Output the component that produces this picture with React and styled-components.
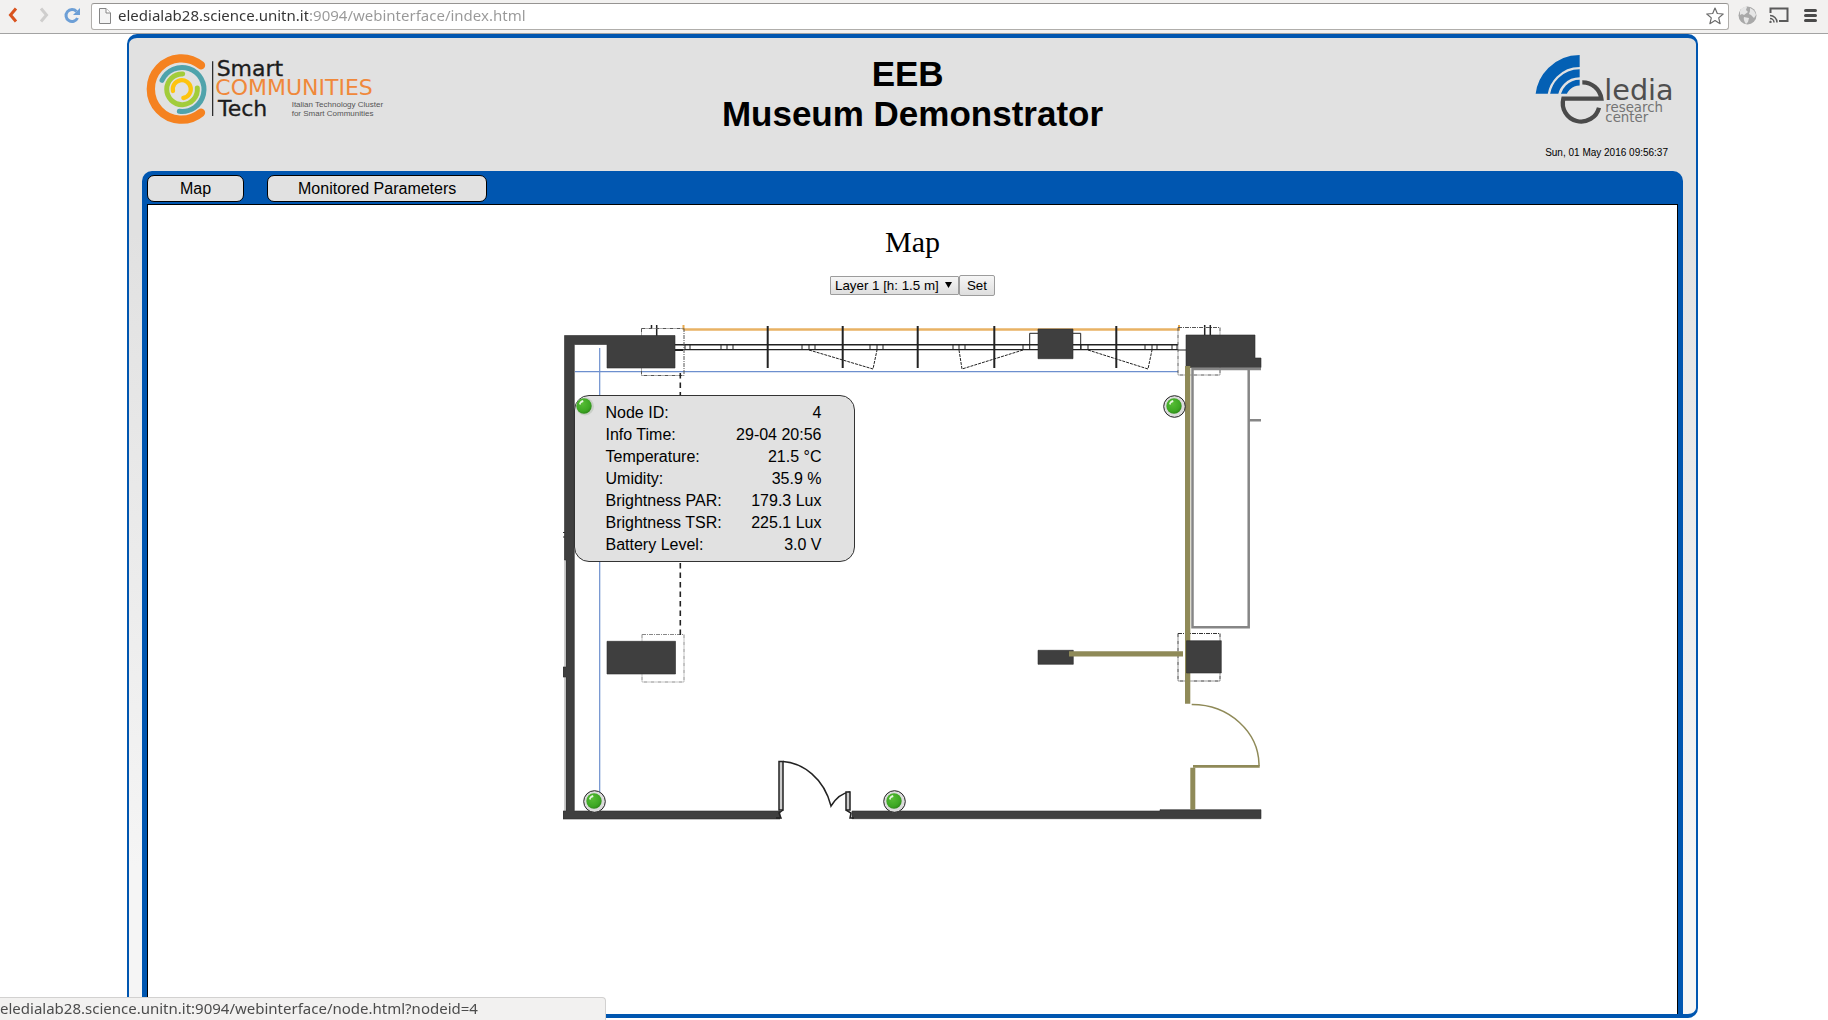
import React from "react";
import styled, { createGlobalStyle } from "styled-components";

const BLUE = "#0056b0";
const GREY = "#e1e1e1";
const WALL = "#3f3f3f";
const OLIVE = "#8f8a58";
const SANS = '"Liberation Sans", Arial, sans-serif';
const SERIF = '"Liberation Serif", "Times New Roman", serif';
const UI = '"Noto Sans", "Open Sans", sans-serif';
const WIDE = '"DejaVu Sans", sans-serif';

const GlobalStyle = createGlobalStyle`
  * { box-sizing: border-box; }
  body { margin: 0; background: #fff; color: #000; font-family: ${SANS}; }
`;

const Screen = styled.div`
  min-height: 100vh;
  display: flex;
  flex-direction: column;
`;

/* Browser toolbar */
const Toolbar = styled.div`
  display: flex;
  align-items: center;
  height: 34px;
  padding: 0 0 3px 4px;
  background: #f2f1f0;
  border-bottom: 1px solid #a3a3a3;
`;

const ToolButton = styled.button`
  display: flex;
  align-items: center;
  justify-content: center;
  width: ${(p) => p.$width}px;
  height: 24px;
  padding: 0;
  border: 0;
  background: none;
`;

const History = styled.div`
  display: flex;
  gap: 6px;
`;

const AddressBar = styled.label`
  flex: 1;
  display: flex;
  align-items: center;
  height: 27px;
  margin: 2px 0 0 7px;
  padding: 0 4px 0 7px;
  gap: 7px;
  background: #fff;
  border: 1px solid #b0aeab;
  border-top-color: #969492;
  border-radius: 3px;
`;

const Address = styled.input`
  flex: 1;
  min-width: 0;
  height: 24px;
  padding: 0 0 2px;
  border: 0;
  outline: 0;
  font: 15px/22px ${UI};
  color: transparent;
  background: linear-gradient(to right, #333 190px, #989898 190px);
  background-clip: text;
  -webkit-background-clip: text;
`;

const Status = styled.div`
  position: fixed;
  left: 0;
  bottom: 0;
  width: 606px;
  height: 23px;
  background: #f2f1f0;
  border: 1px solid #d2d1d0;
  border-width: 1px 1px 0 0;
  border-radius: 0 4px 0 0;
  font: 15px/20px ${UI};
  color: #4c4c4c;
  white-space: nowrap;
`;

/* Page frame */
const Frame = styled.div`
  flex: 1;
  display: flex;
  flex-direction: column;
  margin: 0 130px 2px 127px;
  border: solid ${BLUE};
  border-width: 4px 2px;
  border-radius: 10px;
  background: linear-gradient(${GREY} 20%, #f5f5f5 85%);
`;

const Header = styled.header`
  display: grid;
  grid-template-columns: 1fr auto 1fr;
  align-items: start;
  padding: 16px 18px 12px;
`;

const Title = styled.h1`
  margin: 0;
  font: bold 35px/40px ${SANS};
  text-align: center;
`;

const Brand = styled.div`
  display: flex;
  flex-direction: column;
  align-items: flex-end;
  gap: 23px;
  padding-right: 2px;
`;

const Logo = styled.svg`
  display: block;
  overflow: visible;
`;

const Clock = styled.time`
  padding-right: 8px;
  font: 10px/12px ${SANS};
`;

const Panel = styled.div`
  flex: 1;
  display: flex;
  flex-direction: column;
  margin: 0 13px;
  padding: 0 5px;
  background: ${BLUE};
  border-radius: 10px 10px 0 0;
`;

const Nav = styled.nav`
  display: flex;
  gap: 23px;
  padding: 4px 0 2px;
`;

const Tab = styled.button`
  min-width: 97px;
  height: 27px;
  padding: 0 30px;
  border: 1px solid #000;
  border-radius: 7px;
  background: ${GREY};
  color: #000;
  font: 16px/22px ${SANS};
`;

const Content = styled.main`
  flex: 1;
  display: flex;
  flex-direction: column;
  align-items: center;
  padding: 20px 0 32px;
  background: #fff;
  border: 1px solid #000;
  border-bottom: 0;
`;

const Heading = styled.h2`
  margin: 0 0 16px;
  font: 30px/34px ${SERIF};
`;

const LayerForm = styled.form`
  display: flex;
  align-items: center;
  margin-bottom: 29px;
`;

const SelectBox = styled.div`
  position: relative;
  display: flex;
`;

const Arrow = styled.svg`
  position: absolute;
  right: 7px;
  top: 6px;
  pointer-events: none;
`;

const LayerSelect = styled.select`
  appearance: none;
  width: 129px;
  height: 19px;
  padding: 0 4px;
  border: 1px solid #9c9c9c;
  border-radius: 1px;
  background: linear-gradient(#f6f6f6, #dedede);
  color: #000;
  font-family: ${SANS};
`;

const SetButton = styled.button`
  width: 36px;
  height: 21px;
  padding: 0;
  border: 1px solid #9c9c9c;
  border-radius: 2px;
  background: linear-gradient(#f6f6f6, #dedede);
  color: #000;
  font-family: ${SANS};
`;

/* Floor map */
const MapArea = styled.div`
  position: relative;
  width: 700px;
`;

const Plan = styled.svg`
  display: block;
  width: 100%;
`;

const Marker = styled.a`
  position: absolute;
  z-index: ${(p) => (p.$active ? 2 : 0)};
  left: ${(p) => p.$x}px;
  top: ${(p) => p.$y}px;
  width: 23px;
  height: 23px;
  margin: -11px 0 0 -11px;
  svg { display: block; }
`;

const Tooltip = styled.div`
  position: absolute;
  z-index: 1;
  left: 11px;
  top: 70px;
  width: 281px;
  padding: 6px 32px 5px 31px;
  border: 1px solid #333;
  border-radius: 15px;
  background: ${GREY};
`;

const Readings = styled.table`
  width: 100%;
  border-collapse: collapse;
  font: 16px/22px ${SANS};
`;

const Name = styled.th`
  padding: 0;
  font-weight: normal;
  text-align: left;
`;

const Value = styled.td`
  padding: 0;
  text-align: right;
`;

const readings = [
  ["Node ID:", "4"],
  ["Info Time:", "29-04 20:56"],
  ["Temperature:", "21.5 °C"],
  ["Umidity:", "35.9 %"],
  ["Brightness PAR:", "179.3 Lux"],
  ["Brightness TSR:", "225.1 Lux"],
  ["Battery Level:", "3.0 V"],
];

const nodes = [
  { id: 4, x: 21, y: 81, active: true },
  { id: 3, x: 611, y: 81 },
  { id: 1, x: 31, y: 476 },
  { id: 2, x: 331, y: 476 },
];

function SmartLogo() {
  return (
    <Logo width="236" height="70" viewBox="51 42 708 210" role="img" aria-label="Smart Communities Tech">
      <g fill="none" strokeLinecap="round">
        <path d="M213 76A92 92 0 1 0 213 218" stroke="#f58220" strokeWidth="25" />
        <path d="M96 121A66 66 0 1 1 148 214" stroke="#4fa3ab" strokeWidth="15" />
        <path d="M158 102A46 46 0 1 0 202 144" stroke="#a2cc3a" strokeWidth="15" />
        <path d="M129 153A27 27 0 1 1 160 174" stroke="#fdc40f" strokeWidth="13" />
      </g>
      <path d="M248 64V228" stroke="#1d1d1d" strokeWidth="3.500" />
      <g fontFamily={WIDE}>
        <text x="260" y="107" fontSize="66" fill="#1d1d1d" stroke="#1d1d1d">Smart</text>
        <text x="256" y="166" fontSize="66" fill="#f0883a">COMMUNITIES</text>
        <text x="264" y="227" fontSize="66" fill="#1d1d1d" stroke="#1d1d1d">Tech</text>
      </g>
      <g fontFamily={SANS} fontSize="24" fill="#555">
        <text x="485" y="200">Italian Technology Cluster</text>
        <text x="485" y="227">for Smart Communities</text>
      </g>
    </Logo>
  );
}

function ElediaLogo() {
  return (
    <Logo width="141" height="70" viewBox="107 44 423 210" role="img" aria-label="Eledia research center">
      <defs>
        <clipPath id="waves"><rect x="100" y="40" width="141" height="123" /></clipPath>
      </defs>
      <g clipPath="url(#waves)" fill="none" stroke="#0460b4">
        <circle cx="241" cy="180" r="115" strokeWidth="36" />
        <circle cx="241" cy="180" r="78" strokeWidth="24" />
        <circle cx="241" cy="180" r="50" strokeWidth="17" />
      </g>
      <path d="M249 129A57 57 0 0 1 306 178H192A55 55 0 0 0 299 205" fill="none" stroke="#4a4a4a" strokeWidth="13" />
      <g fontFamily={WIDE}>
        <text x="315" y="183" fontSize="86" fill="#4f4f4f">ledia</text>
        <text x="318" y="217" fontSize="40" fill="#747474">research</text>
        <text x="318" y="247" fontSize="40" fill="#747474">center</text>
      </g>
    </Logo>
  );
}

function Led({ active }) {
  return (
    <svg width="23" height="23" viewBox="0 0 23 23" aria-hidden="true">
      <defs>
        <radialGradient id="led" cx="0.4" cy="0.35" r="0.7">
          <stop offset="0" stopColor="#56bd35" />
          <stop offset="0.7" stopColor="#3da723" />
          <stop offset="1" stopColor="#2c8418" />
        </radialGradient>
      </defs>
      {active ? (
        <circle cx="12" cy="11.500" r="9" fill="#c9cfc7" />
      ) : (
        <circle cx="11.500" cy="11.500" r="10.800" fill="#dcdcdc" stroke="#222" />
      )}
      <circle cx="11" cy="11" r="7.700" fill="url(#led)" />
      <path d="M6 9Q7 5.500 10 5L10.500 7Q7.500 7.500 7.500 10Z" fill="#e4f6dd" />
    </svg>
  );
}

const ticks = [
  685, 690, 721, 727, 733, 802, 809, 815, 870, 877, 883, 953, 959, 965, 1023, 1081, 1088, 1145, 1152, 1157, 1172, 1177,
];
const mullions = [767.7, 842.7, 917.7, 994.3, 1116.3];

function FloorPlan() {
  return (
    <Plan viewBox="563 325 700 495" role="img" aria-label="Floor plan">
      {/* guide lines */}
      <g stroke="#6d8fce" strokeWidth="1.200">
        <path d="M575 371.700H1178M599.700 348V792" />
      </g>
      <path d="M683.500 329.500H1180" stroke="#e8b264" strokeWidth="2.400" />
      <path d="M683.500 325V330M1179 325V330" stroke="#e8a94c" strokeWidth="2" />

      {/* window strip */}
      <g stroke="#222" fill="none">
        <path d="M675 344.700H1178" strokeWidth="1.500" />
        <path d="M675 349.700H1178" strokeWidth="1.200" />
        {ticks.map((x) => (
          <path key={x} d={`M${x} 345V350`} />
        ))}
        {mullions.map((x) => (
          <path key={x} d={`M${x} 326V368`} strokeWidth="2" />
        ))}
        <path d="M1029.700 349V333.300H1080.700V349M675 350.500H683M1178 350H1187" />
        <path d="M809 350L873 369L877 350M1023 350L962 369L959 350M1088 350L1148 369L1152 350" strokeDasharray="3 1" />
        <path d="M651.500 325V328M656.700 325V336M1204.700 325V335M1210.300 325V335" strokeWidth="1.500" />
      </g>

      {/* column outlines */}
      <g fill="none" stroke="#555" strokeDasharray="4 1 1 1">
        <path d="M641.500 328.500H684V375.500H641.500Z" />
        <path d="M1178 327.500H1220V375H1178Z" />
        <path d="M642 634.500H684V682H642Z" stroke="#888" />
        <path d="M1178 633.500H1220V681H1178Z" stroke="#333" />
      </g>
      <path d="M680.300 373V637" stroke="#222" strokeWidth="1.600" strokeDasharray="5.500 4" />

      {/* walls and columns */}
      <path d="M564.500 535V812" stroke="#ccc" />
      <path d="M563 532.500H566M563 537H566" stroke="#333" />
      <g fill={WALL} stroke="#2c2c2c" strokeWidth="0.600">
        <path d="M564.500 335.500H675V368H607V344.500H574.300V811H780V819H563V811H566V677H563V667H566V560H564.500Z" />
        <path d="M1038 329H1073V358.700H1038Z" />
        <path d="M1186 335H1255V358H1261V367.500H1186Z" />
        <path d="M607 641.300H675.500V674H607Z" />
        <path d="M1038 650.300H1073.300V664.300H1038Z" />
        <path d="M852 811H1160V809.700H1261V818.700H852Z" />
      </g>

      {/* side room */}
      <g fill="none" stroke="#868686" strokeWidth="2.500">
        <path d="M1192.500 369H1248.700V627.200H1192.500ZM1248 369H1261M1249 420.300H1261" />
      </g>
      <g fill={OLIVE}>
        <path d="M1185 366H1190.300V703.700H1185Z" />
        <path d="M1069 651.300H1183V656.500H1069Z" />
        <path d="M1193 765H1259.700V767.700H1193Z" />
        <path d="M1190.300 767.700H1195.300V809.700H1190.300Z" />
      </g>
      <path d="M1191.700 704.500A67 61 0 0 1 1259 766" fill="none" stroke={OLIVE} strokeWidth="1.500" />
      <path d="M1186.500 640.700H1221.300V673H1186.500Z" fill={WALL} stroke="#2c2c2c" strokeWidth="0.600" />

      {/* entrance door */}
      <g fill="none" stroke="#222" strokeWidth="1.500">
        <path d="M779 761.500H783V810H779Z" fill="#ccc" />
        <path d="M783 761.500C803 763 824 778 831 806C836 798 842 793 850 792" />
        <path d="M846 792H850V810H846Z" fill="#ccc" />
        <path d="M783 810L779 813L781 818H776M846 810L851 813L850 818H854" />
      </g>
    </Plan>
  );
}

export default function App() {
  return (
    <>
      <GlobalStyle />
      <Screen>
        <Toolbar>
          <History>
            <ToolButton $width={18} aria-label="Back">
              <svg width="10" height="16" viewBox="0 0 10 16"><path d="M8 1.500L2.500 8L8 14.500" fill="none" stroke="#d9531e" strokeWidth="3" /></svg>
            </ToolButton>
            <ToolButton $width={32} aria-label="Forward">
              <svg width="10" height="16" viewBox="0 0 10 16"><path d="M2 1.500L7.500 8L2 14.500" fill="none" stroke="#cfcecd" strokeWidth="3" /></svg>
            </ToolButton>
          </History>
          <ToolButton $width={24} aria-label="Reload">
            <svg width="17" height="17" viewBox="0 0 17 17">
              <path d="M13.500 11A6 6 0 1 1 12.500 4.500" fill="none" stroke="#6d9fd6" strokeWidth="3" />
              <path d="M16 1V8H9Z" fill="#6d9fd6" />
            </svg>
          </ToolButton>
          <AddressBar>
            <svg width="12" height="16" viewBox="0 0 12 16" aria-hidden="true">
              <path d="M.5.500H7L11.500 5V15.500H.5Z" fill="#f4f4f4" stroke="#858585" />
              <path d="M7 .5V5H11.500" fill="#fff" stroke="#858585" />
            </svg>
            <Address
              aria-label="Address"
              spellCheck={false}
              defaultValue="eledialab28.science.unitn.it:9094/webinterface/index.html"
            />
            <svg width="18" height="18" viewBox="0 0 18 18" aria-hidden="true">
              <path d="M9 1L11.300 6.500L17.200 7L12.700 10.900L14.100 16.700L9 13.600L3.900 16.700L5.300 10.900L.8 7L6.700 6.500Z" fill="#fff" stroke="#6b6b6b" strokeWidth="1.200" strokeLinejoin="round" />
            </svg>
          </AddressBar>
          <ToolButton $width={36} aria-label="Network">
            <svg width="19" height="19" viewBox="0 0 19 19">
              <circle cx="9.500" cy="9.500" r="9" fill="#a9a9a9" />
              <path d="M2 5Q5 0 9 1L8 4L10 6L6 9L4 8L2 9ZM12 2Q17 4 18 9L16 12L13 9L11 8L12 5ZM6 11L11 12L10 16L8 18Q5 14 6 11Z" fill="#e6e6e6" />
            </svg>
          </ToolButton>
          <ToolButton $width={28} aria-label="Cast">
            <svg width="20" height="16" viewBox="0 0 20 16" fill="none" stroke="#5a5a5a">
              <path d="M1.500 6V1.500H18.500V14H10" strokeWidth="2" />
              <path d="M1 8.500A7 7 0 0 1 8 15.500M1 11.500A4 4 0 0 1 5 15.500" strokeWidth="1.500" />
              <circle cx="1.500" cy="15" r="0.800" fill="#5a5a5a" />
            </svg>
          </ToolButton>
          <ToolButton $width={35} aria-label="Menu">
            <svg width="13" height="13" viewBox="0 0 13 13"><path d="M1.500 1.500H11.500M1.500 6.500H11.500M1.500 11.500H11.500" stroke="#4a4a4a" strokeWidth="3" strokeLinecap="round" /></svg>
          </ToolButton>
        </Toolbar>

        <Frame>
          <Header>
            <SmartLogo />
            <Title>EEB&nbsp;<br />Museum Demonstrator</Title>
            <Brand>
              <ElediaLogo />
              <Clock dateTime="2016-05-01T09:56:37">Sun, 01 May 2016 09:56:37</Clock>
            </Brand>
          </Header>
          <Panel>
            <Nav>
              <Tab type="button">Map</Tab>
              <Tab type="button">Monitored Parameters</Tab>
            </Nav>
            <Content>
              <Heading>Map</Heading>
              <LayerForm onSubmit={(e) => e.preventDefault()}>
                <SelectBox>
                  <LayerSelect aria-label="Layer">
                    <option>Layer 1 [h: 1.5 m]</option>
                  </LayerSelect>
                  <Arrow width="7" height="6" viewBox="0 0 7 6"><path d="M0 0H7L3.500 6Z" /></Arrow>
                </SelectBox>
                <SetButton type="submit">Set</SetButton>
              </LayerForm>
              <MapArea>
                <FloorPlan />
                {nodes.map((n) => (
                  <Marker
                    key={n.id}
                    href={`#node-${n.id}`}
                    aria-label={`Node ${n.id}`}
                    $x={n.x}
                    $y={n.y}
                    $active={n.active}
                  >
                    <Led active={n.active} />
                  </Marker>
                ))}
                <Tooltip role="tooltip">
                  <Readings>
                    <tbody>
                      {readings.map(([name, value]) => (
                        <tr key={name}>
                          <Name scope="row">{name}</Name>
                          <Value>{value}</Value>
                        </tr>
                      ))}
                    </tbody>
                  </Readings>
                </Tooltip>
              </MapArea>
            </Content>
          </Panel>
        </Frame>
      </Screen>
      <Status>eledialab28.science.unitn.it:9094/webinterface/node.html?nodeid=4</Status>
    </>
  );
}
